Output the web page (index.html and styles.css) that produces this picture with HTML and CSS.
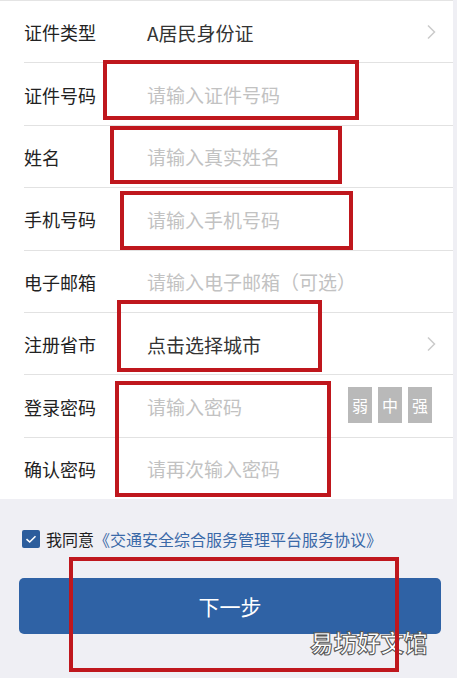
FILE: index.html
```html
<!DOCTYPE html>
<html lang="zh-CN">
<head>
<meta charset="utf-8">
<title>注册</title>
<link rel="stylesheet" href="styles.css">
</head>
<body>
<div class="page">
  <div class="form">
    <div class="row">
      <span class="label">证件类型</span>
      <span class="value">A居民身份证</span>
      <svg class="chev" viewBox="0 0 10 16" width="10" height="16"><path d="M2 1.5 L8.5 8 L2 14.5" fill="none" stroke="#cbcbcb" stroke-width="1.5"/></svg>
    </div>
    <div class="row">
      <span class="label">证件号码</span>
      <span class="value ph">请输入证件号码</span>
    </div>
    <div class="row">
      <span class="label">姓名</span>
      <span class="value ph">请输入真实姓名</span>
    </div>
    <div class="row">
      <span class="label">手机号码</span>
      <span class="value ph">请输入手机号码</span>
    </div>
    <div class="row">
      <span class="label">电子邮箱</span>
      <span class="value ph">请输入电子邮箱（可选）</span>
    </div>
    <div class="row">
      <span class="label">注册省市</span>
      <span class="value">点击选择城市</span>
      <svg class="chev" viewBox="0 0 10 16" width="10" height="16"><path d="M2 1.5 L8.5 8 L2 14.5" fill="none" stroke="#cbcbcb" stroke-width="1.5"/></svg>
    </div>
    <div class="row">
      <span class="label">登录密码</span>
      <span class="value ph">请输入密码</span>
      <div class="strength">
        <span class="lvl">弱</span>
        <span class="lvl">中</span>
        <span class="lvl">强</span>
      </div>
    </div>
    <div class="row last">
      <span class="label">确认密码</span>
      <span class="value ph">请再次输入密码</span>
    </div>
  </div>
  <div class="footer">
    <div class="agree">
      <span class="check"><svg viewBox="0 0 18 18" width="18" height="18"><path d="M4.5 9.2 L7.7 12 L13.5 6.3" fill="none" stroke="#fff" stroke-width="1.6"/></svg></span>
      <span class="agree-text">我同意</span>
      <span class="link">《交通安全综合服务管理平台服务协议》</span>
    </div>
    <button class="next">下一步</button>
    <div class="watermark">易坊好文馆</div>
  </div>

  <div class="mark m1"></div>
  <div class="mark m2"></div>
  <div class="mark m3"></div>
  <div class="mark m4"></div>
  <div class="mark m5"></div>
  <div class="mark m6"></div>
</div>
</body>
</html>
```

FILE: styles.css
```css
* { box-sizing: border-box; }
html, body {
  margin: 0;
  padding: 0;
}
body {
  background: #efeff4;
  font-family: "Noto Sans CJK SC", "Noto Sans", sans-serif;
}
.page {
  position: relative;
  width: 457px;
  height: 678px;
  overflow: hidden;
  background: #efeff4;
}
.form {
  background: #fff;
  border-top: 1px solid #e4e4e4;
  margin-right: 4px;
}
.row {
  display: flex;
  align-items: center;
  height: 62.4px;
  margin-left: 24px;
  padding-right: 21px;
  border-bottom: 1px solid #e2e2e2;
  padding-top: 1px;
}
.row.last {
  border-bottom: none;
  height: 61px;
}
.label {
  width: 123px;
  flex: none;
  font-size: 18px;
  color: #222;
  line-height: 1;
}
.value {
  flex: 1;
  font-size: 19px;
  color: #333;
  line-height: 1;
}
.value.ph {
  color: #c2c2c2;
}
.chev {
  flex: none;
  margin-right: -4px;
}
.strength {
  display: flex;
  gap: 6px;
  margin-right: 0;
  margin-top: -4px;
}
.lvl {
  width: 24px;
  height: 36px;
  background: #b9b9b9;
  color: #fff;
  font-size: 16px;
  display: flex;
  align-items: center;
  justify-content: center;
}
.footer {
  position: relative;
  height: 180px;
  padding-top: 31px;
}
.agree {
  display: flex;
  align-items: center;
  padding-left: 22px;
  height: 18px;
}
.check {
  width: 18px;
  height: 18px;
  background: #2c5d9c;
  border-radius: 2px;
  display: flex;
}
.agree-text {
  margin-left: 6px;
  font-size: 16px;
  color: #1e1e1e;
}
.link {
  margin-left: 0;
  font-size: 16px;
  color: #3a69a8;
}
.next {
  display: block;
  margin: 30px 16px 0 19px;
  width: 422px;
  height: 56px;
  border: none;
  border-radius: 5px;
  background: #2f62a5;
  color: #fff;
  font-family: "Noto Sans CJK SC", "Noto Sans", sans-serif;
  font-size: 21px;
  padding: 0;
}
.watermark {
  position: absolute;
  left: 310px;
  top: 132px;
  font-size: 23.5px;
  line-height: 1;
  color: #fff;
  font-weight: 700;
  -webkit-text-stroke: 1px #555;
  white-space: nowrap;
}
.mark {
  position: absolute;
  border: 4px solid #bf171d;
}
.m1 { left: 103px; top: 60px; width: 256px; height: 60px; }
.m2 { left: 110px; top: 126px; width: 232px; height: 58px; }
.m3 { left: 120px; top: 191px; width: 233px; height: 59px; }
.m4 { left: 117px; top: 300px; width: 205px; height: 72px; }
.m5 { left: 115px; top: 381px; width: 216px; height: 116px; }
.m6 { left: 69px; top: 557px; width: 330px; height: 115px; }
```
